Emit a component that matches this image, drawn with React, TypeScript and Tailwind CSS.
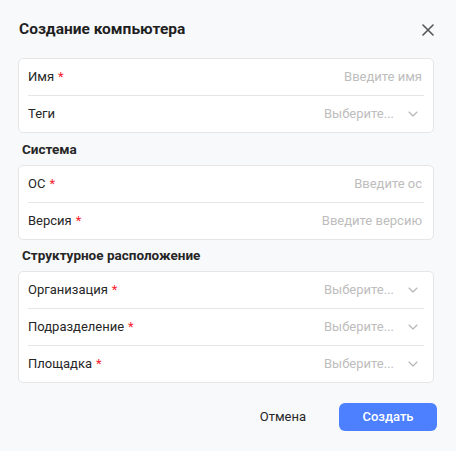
import React from "react";

type Field = {
  label: string;
  required?: boolean;
  placeholder: string;
  select?: boolean;
};

const Chevron = () => (
  <svg width="10" height="6" viewBox="0 0 10 6" fill="none" className="shrink-0">
    <path d="M1 1l4 4 4-4" stroke="#b5b5b5" strokeWidth="1.1" strokeLinecap="round" strokeLinejoin="round" />
  </svg>
);

const FieldRow = ({ f, last }: { f: Field; last: boolean }) => (
  <div
    className={`flex items-center justify-between ${last ? "h-[36px]" : "h-[37px] border-b border-[#e6e6e6]"}`}
  >
    <div className="flex items-center text-[13px] text-[#262626]">
      <span>{f.label}</span>
      {f.required && <span className="ml-[4px] text-[#f5222d]">*</span>}
    </div>
    {f.select ? (
      <div className="flex items-center pr-[6px] text-[13px] text-[#bdbdbd]">
        <span>{f.placeholder}</span>
        <span className="ml-[14px] flex items-center">
          <Chevron />
        </span>
      </div>
    ) : (
      <div className="pr-[2px] text-[13px] text-[#bdbdbd]">{f.placeholder}</div>
    )}
  </div>
);

const Card = ({ fields }: { fields: Field[] }) => (
  <div className="rounded-[5px] border border-[#e6e6e6] bg-white px-[9px]">
    {fields.map((f, i) => (
      <FieldRow key={f.label} f={f} last={i === fields.length - 1} />
    ))}
  </div>
);

const Heading = ({ children, h }: { children: React.ReactNode; h: string }) => (
  <div className={`flex items-center pl-[4px] text-[13.5px] font-bold text-[#262626] ${h}`}>{children}</div>
);

export default function App() {
  return (
    <div
      className="h-[451px] w-[456px] bg-[#f8f9fb] pl-[18px] pr-[22px]"
      style={{ fontFamily: "Roboto, 'Liberation Sans', Arial, sans-serif" }}
    >
      <div className="flex h-[58px] items-start justify-between pt-[18px]">
        <div className="flex h-[24px] items-center pl-[1px] text-[15.5px] font-bold text-[#1f1f1f]">
          Создание компьютера
        </div>
        <button className="flex h-[24px] w-[12px] items-center justify-center">
          <svg width="12" height="12" viewBox="0 0 12 12" fill="none">
            <path d="M1 1l10 10M11 1L1 11" stroke="#555" strokeWidth="1.6" strokeLinecap="round" />
          </svg>
        </button>
      </div>

      <Card
        fields={[
          { label: "Имя", required: true, placeholder: "Введите имя" },
          { label: "Теги", placeholder: "Выберите...", select: true },
        ]}
      />

      <Heading h="h-[32px]">Система</Heading>
      <Card
        fields={[
          { label: "ОС", required: true, placeholder: "Введите ос" },
          { label: "Версия", required: true, placeholder: "Введите версию" },
        ]}
      />

      <Heading h="h-[31px]">Структурное расположение</Heading>
      <Card
        fields={[
          { label: "Организация", required: true, placeholder: "Выберите...", select: true },
          { label: "Подразделение", required: true, placeholder: "Выберите...", select: true },
          { label: "Площадка", required: true, placeholder: "Выберите...", select: true },
        ]}
      />

      <div className="mr-[-3px] mt-[20px] flex items-center justify-end gap-[16px]">
        <button className="h-[28px] px-[17px] text-[13px] text-[#262626]">Отмена</button>
        <button className="h-[28px] w-[98px] rounded-[6px] bg-[#4d80ff] text-[13px] font-medium text-white">
          Создать
        </button>
      </div>
    </div>
  );
}
